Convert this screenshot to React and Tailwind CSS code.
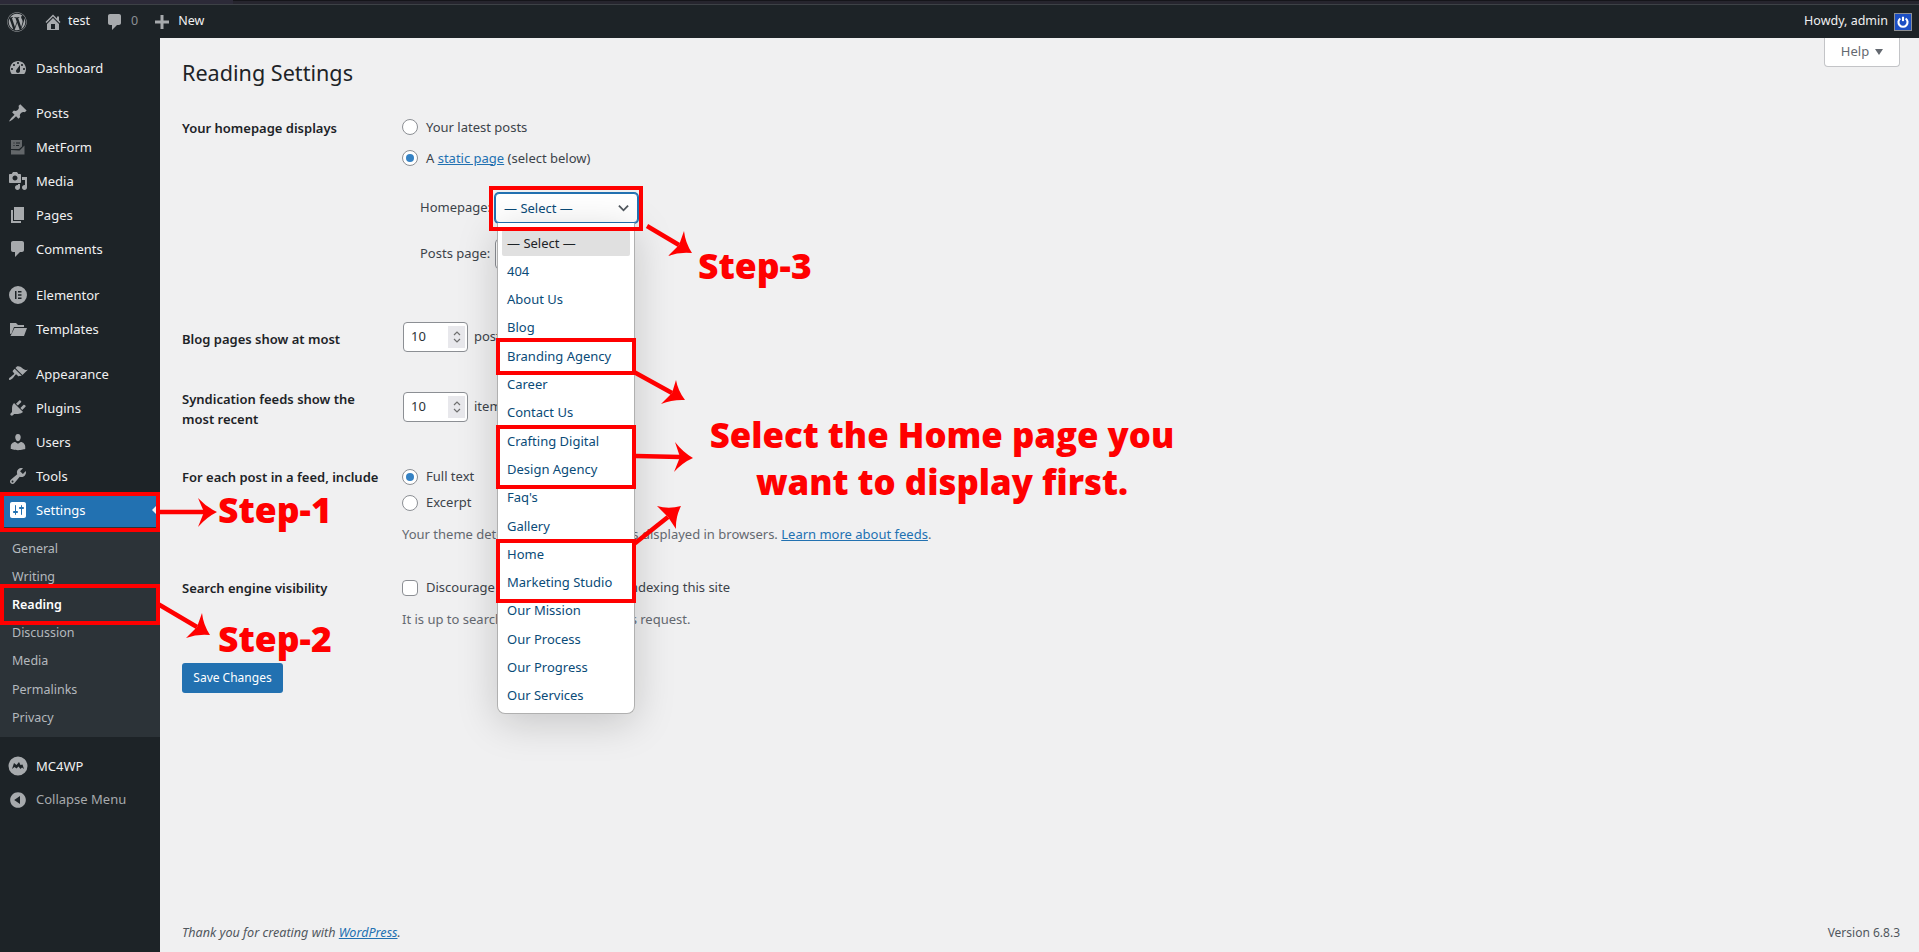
import React from "react";
import { FaWordpress } from "react-icons/fa";

const icons = {
  dashboard:
    "M3.76 16h12.48c1.1-1.37 1.76-3.11 1.76-5 0-4.42-3.58-8-8-8s-8 3.58-8 8c0 1.89.66 3.63 1.76 5zM10 4c.55 0 1 .45 1 1s-.45 1-1 1-1-.45-1-1 .45-1 1-1zM6 6c.55 0 1 .45 1 1s-.45 1-1 1-1-.45-1-1 .45-1 1-1zm8 0c.55 0 1 .45 1 1s-.45 1-1 1-1-.45-1-1 .45-1 1-1zm-5.37 5.55L12 7v6c0 1.1-.9 2-2 2s-2-.9-2-2c0-.57.24-1.08.63-1.45zM4 10c.55 0 1 .45 1 1s-.45 1-1 1-1-.45-1-1 .45-1 1-1zm12 0c.55 0 1 .45 1 1s-.45 1-1 1-1-.45-1-1 .45-1 1-1z",
  post: "M10.44 3.02l1.82-1.82 6.36 6.35-1.83 1.82c-1.05-.68-2.48-.57-3.41.36l-.75.75c-.92.93-1.04 2.35-.35 3.41l-1.83 1.82-2.41-2.41-2.8 2.79c-.42.42-3.38 2.71-3.8 2.29s1.86-3.39 2.28-3.81l2.79-2.79L4.1 9.36l1.83-1.82c1.05.69 2.48.57 3.4-.36l.75-.75c.93-.92 1.05-2.35.36-3.41z",
  form: "M3 3h11v6.500l-3 2.500H3zM5.500 5.500v1h1v-1zm2.500 0v1h4v-1zM5.500 8v1h1V8zM8 8v1h3V8zM3 13l8.500.5 5-5v9H3z",
  media:
    "M13 11V4c0-.55-.45-1-1-1h-1.67L9 1H5L3.67 3H2c-.55 0-1 .45-1 1v7c0 .55.45 1 1 1h10c.55 0 1-.45 1-1zM7 4.500c1.380 0 2.500 1.120 2.500 2.500S8.380 9.500 7 9.500 4.500 8.380 4.500 7 5.620 4.500 7 4.500zM14 6h5v10.500c0 1.380-1.120 2.500-2.500 2.500S14 17.880 14 16.500s1.120-2.500 2.500-2.500c.17 0 .34.02.5.05V9h-3V6zm-4 8.050V13h2v3.500c0 1.380-1.120 2.500-2.500 2.500S7 17.880 7 16.500 8.120 14 9.500 14c.17 0 .34.02.5.05z",
  pages: "M6 15V2h10v13H6zm-1 1h8v2H3V5h2v11z",
  comments:
    "M5 2h9c1.100 0 2 .9 2 2v7c0 1.100-.9 2-2 2h-2l-5 5v-5H5c-1.100 0-2-.9-2-2V4c0-1.100.9-2 2-2z",
  elementor:
    "M10 1a9 9 0 1 0 0 18 9 9 0 0 0 0-18zM7 6h1.500v8H7zm3 0h3.500v1.500H10zm0 3.250h3.500v1.500H10zm0 3.250h3.500V14H10z",
  templates: "M2 4h6l2 2h6v2H6L3.500 14.500 2 15zM6.500 9H19l-3 8H2.500z",
  appearance:
    "M14.480 11.060L7.410 3.990l1.500-1.500c.5-.56 2.300-.47 3.510.32 1.210.8 1.430 1.280 2.910 2.100 1.180.64 2.450 1.260 4.450.85zm-.71.71L6.700 4.700 4.930 6.470c-.39.39-.39 1.020 0 1.410l1.060 1.060c.39.39.39 1.030 0 1.420-.6.6-1.430 1.110-2.210 1.690-.35.26-.7.53-1.010.84C1.430 13.230.4 14.840 1.190 15.630c.79.79 2.400-.24 3.750-1.580.31-.31.58-.66.85-1.020.58-.77 1.070-1.590 1.660-2.180.39-.39 1.020-.39 1.410 0l1.060 1.060c.39.39 1.020.39 1.410 0z",
  plugins:
    "M13.110 4.360L9.870 7.600 8 5.730l3.240-3.240c.35-.34 1.050-.2 1.560.32.52.51.66 1.210.31 1.550zm-8 1.770l.91-1.120 9.010 9.010-1.190.84c-.71.71-2.630 1.160-3.820 1.160H6.140L4.900 17.260c-.59.59-1.540.59-2.120 0-.59-.58-.59-1.530 0-2.120l1.240-1.240v-3.880c0-1.130.4-3.190 1.090-3.890zm7.260 3.970l3.240-3.240c.34-.35 1.040-.21 1.550.31.52.51.66 1.210.31 1.550l-3.240 3.250z",
  users:
    "M10 9.250c-2.270 0-2.730-3.440-2.730-3.440C7 4.020 7.820 2 9.970 2c2.160 0 2.980 2.020 2.710 3.810 0 0-.41 3.440-2.680 3.440zm0 2.570L12.720 10c2.390 0 4.520 2.330 4.520 4.530v2.490s-3.650 1.130-7.240 1.130c-3.650 0-7.240-1.130-7.240-1.130v-2.490c0-2.250 1.940-4.480 4.470-4.480z",
  tools:
    "M16.680 9.770c-1.340 1.340-3.300 1.670-4.950.99l-5.410 6.520c-.99.99-2.590.99-3.580 0s-.99-2.590 0-3.570l6.520-5.420c-.68-1.650-.35-3.610.99-4.950 1.280-1.280 3.120-1.620 4.720-1.060l-2.890 2.890 2.820 2.820 2.860-2.870c.53 1.580.18 3.390-1.080 4.650zM3.810 16.210c.4.39 1.040.39 1.430 0 .4-.4.4-1.040 0-1.430-.39-.4-1.030-.4-1.430 0-.39.39-.39 1.030 0 1.430z",
  settings:
    "M18 16V4c0-1.100-.9-2-2-2H4c-1.100 0-2 .9-2 2v12c0 1.100.9 2 2 2h12c1.100 0 2-.9 2-2zM8 11h1c.55 0 1 .45 1 1s-.45 1-1 1H8v1.500c0 .28-.22.5-.5.5s-.5-.22-.5-.5V13H6c-.55 0-1-.45-1-1s.45-1 1-1h1V5.500c0-.28.22-.5.5-.5s.5.22.5.5V11zm5-2h-1c-.55 0-1-.45-1-1s.45-1 1-1h1V5.500c0-.28.22-.5.5-.5s.5.22.5.5V7h1c.55 0 1 .45 1 1s-.45 1-1 1h-1v5.500c0 .28-.22.5-.5.5s-.5-.22-.5-.5V9z",
  mc4wp:
    "M10 .5a9.500 9.500 0 1 0 0 19 9.500 9.500 0 0 0 0-19zM4 13l2-6 2.500 2L11 6l1.500 3 2-.5 1.500 4.500-2-1.500-1.500 1.500-2-2.500-2 2-2-1.500z",
  collapse:
    "M10 2.160c4.330 0 7.840 3.510 7.840 7.840s-3.510 7.840-7.840 7.840S2.160 14.330 2.160 10 5.710 2.160 10 2.160zm2 11.720V6.120L6.180 9.970z",
  home: "M16 8.500l1.530 1.530-1.060 1.060L10 4.620l-6.470 6.470-1.060-1.060L10 2.500l4 4v-2h2v4zm-6-2.460l6 5.990V18H4v-5.970zM12 17v-5H8v5h4z",
  plus: "M17 8.500v3h-5.500V17h-3v-5.500H3v-3h5.500V3h3v5.500z",
};

const Dashicon = ({ name, className }) => (
  <svg viewBox="0 0 20 20" className={className} fill="currentColor" fillRule="evenodd">
    <path d={icons[name]} />
  </svg>
);

const MenuItem = ({ icon, label, active, iconColor = "text-[#a7aaad]" }) => (
  <div
    className={`relative flex items-center h-[34px] text-[13px] ${
      active ? "bg-[#2271b1] text-white" : "text-[#f0f0f1]"
    }`}
  >
    <div className="w-[36px] flex justify-center">
      <Dashicon name={icon} className={`w-5 h-5 ${active ? "text-white" : iconColor}`} />
    </div>
    <span className="pt-[2px]">{label}</span>
    {active && (
      <div className="absolute right-0 top-[9px] w-0 h-0 border-y-[8px] border-y-transparent border-r-[8px] border-r-[#f0f0f1]"></div>
    )}
  </div>
);

const Sidebar = () => {
  const settingsSub = ["General", "Writing", "Reading", "Discussion", "Media", "Permalinks", "Privacy"];
  return (
    <div className="w-[160px] shrink-0 bg-[#1d2327] pt-[13px]">
      <MenuItem icon="dashboard" label="Dashboard" />
      <div className="h-[11px]"></div>
      <MenuItem icon="post" label="Posts" />
      <MenuItem icon="form" label="MetForm" iconColor="text-[#63676a]" />
      <MenuItem icon="media" label="Media" />
      <MenuItem icon="pages" label="Pages" />
      <MenuItem icon="comments" label="Comments" />
      <div className="h-[12px]"></div>
      <MenuItem icon="elementor" label="Elementor" />
      <MenuItem icon="templates" label="Templates" />
      <div className="h-[11px]"></div>
      <MenuItem icon="appearance" label="Appearance" />
      <MenuItem icon="plugins" label="Plugins" />
      <MenuItem icon="users" label="Users" />
      <MenuItem icon="tools" label="Tools" />
      <MenuItem icon="settings" label="Settings" active />
      <div className="bg-[#2c3338] h-[210px] pt-[8px]">
        {settingsSub.map((s) => (
          <div
            key={s}
            className={`h-[28.200px] flex items-center pl-3 text-[12.500px] ${
              s === "Reading" ? "text-white font-semibold" : "text-[#b4b9be]"
            }`}
          >
            {s}
          </div>
        ))}
      </div>
      <div className="h-[12px]"></div>
      <MenuItem icon="mc4wp" label="MC4WP" />
      <div className="flex items-center h-[34px] text-[13px] text-[#a7aaad]">
        <div className="w-[36px] flex justify-center">
          <Dashicon name="collapse" className="w-5 h-5" />
        </div>
        <span>Collapse Menu</span>
      </div>
    </div>
  );
};

const AdminBar = () => (
  <div className="h-[33px] bg-[#1d2327] flex items-center text-[12.500px] text-[#f0f0f1]">
    <FaWordpress className="ml-[7px] w-[20px] h-[20px] text-[#a7aaad]" />
    <Dashicon name="home" className="ml-[16px] w-[20px] h-[20px] text-[#a7aaad]" />
    <span className="ml-[5px]">test</span>
    <Dashicon name="comments" className="ml-[15px] w-[20px] h-[20px] text-[#a7aaad]" />
    <span className="ml-[6px] text-[#8c8f94]">0</span>
    <Dashicon name="plus" className="ml-[14px] w-[20px] h-[20px] text-[#a7aaad]" />
    <span className="ml-[6px]">New</span>
    <span className="ml-auto">Howdy, admin</span>
    <div className="ml-[6px] mr-[7px] w-[18px] h-[18px] bg-[#1c4fc4] border border-[#8c8f94] flex items-center justify-center">
      <svg viewBox="0 0 16 16" className="w-[14px] h-[14px]" fill="none" stroke="white" strokeWidth="2.400">
        <path d="M5 4a5.200 5.200 0 1 0 6 0" />
        <path d="M8 2v5" />
      </svg>
    </div>
  </div>
);

const Radio = ({ checked }) => (
  <div className="w-4 h-4 rounded-full border border-[#8c8f94] bg-white flex items-center justify-center shrink-0">
    {checked && <div className="w-2 h-2 rounded-full bg-[#3582c4]"></div>}
  </div>
);

const NumberInput = () => (
  <div className="w-[65px] h-[30px] rounded-[4px] border border-[#8c8f94] bg-white flex items-center pl-[7px] pr-[2px] text-[13px] text-[#2c3338]">
    <span>10</span>
    <div className="ml-auto w-[17px] h-[22px] bg-[#e8e8ec] flex items-center justify-center">
      <svg viewBox="0 0 10 16" className="w-[10px] h-[16px]" fill="none" stroke="#707070" strokeWidth="1.200">
        <path d="M2 6l3-3 3 3M2 10l3 3 3-3" />
      </svg>
    </div>
  </div>
);

const pages = [
  "404",
  "About Us",
  "Blog",
  "Branding Agency",
  "Career",
  "Contact Us",
  "Crafting Digital",
  "Design Agency",
  "Faq's",
  "Gallery",
  "Home",
  "Marketing Studio",
  "Our Mission",
  "Our Process",
  "Our Progress",
  "Our Services",
];

const SelectDropdown = () => (
  <div className="absolute left-[497px] top-[185px] w-[138px] h-[491px] bg-white rounded-b-[8px] border-x border-b border-[#b0b0b0] shadow-[0_8px_40px_rgba(0,0,0,0.18)] px-[4px] pt-[7px] text-[13px] text-[#0a4b78]">
    <div className="h-[26px] bg-[#e0e0e0] rounded-[2px] flex items-center pl-[5px] pt-[2px] text-[#1d2327]">— Select —</div>
    {pages.map((p) => (
      <div key={p} className="h-[28.300px] flex items-center pl-[5px] pt-[3px] whitespace-nowrap">
        {p}
      </div>
    ))}
  </div>
);

const SettingsForm = () => (
  <div className="relative flex-1 flex flex-col pl-[22px] pr-[19px] text-[13px] text-[#3c434a]">
    <div className="absolute top-0 right-[19px] w-[76px] h-[29px] bg-white border border-t-0 border-[#c3c4c7] rounded-b-[4px] flex items-center justify-center gap-[6px] text-[#646970]">
      <span>Help</span>
      <div className="w-0 h-0 border-x-[4px] border-x-transparent border-t-[6px] border-t-[#646970]"></div>
    </div>

    <h1 className="mt-[20px] h-[30px] text-[21.600px] leading-[30px] text-[#1d2327]">Reading Settings</h1>

    <div className="mt-[29px] flex">
      <div className="w-[220px] pt-[1px] font-semibold text-[#1d2327] leading-[20px]">Your homepage displays</div>
      <div>
        <div className="flex items-center gap-[8px] h-[20px]">
          <Radio />
          <span className="pt-[1px]">Your latest posts</span>
        </div>
        <div className="mt-[11px] flex items-center gap-[8px] h-[20px]">
          <Radio checked />
          <span className="pt-[1px]">
            A <a className="text-[#2271b1] underline">static page</a> (select below)
          </span>
        </div>
        <div className="mt-[25px] ml-[18px] flex items-center h-[30px]">
          <span className="w-[75px] whitespace-nowrap">Homepage:</span>
          <div className="w-[143px] h-[30px] rounded-[4px] border border-[#2271b1] bg-white shadow-[0_0_0_1px_#2271b1] flex items-center justify-between pl-[8px] pr-[8px] text-[#0a4b78]">
            <span className="pt-[2px]">— Select —</span>
            <svg viewBox="0 0 12 8" className="w-[11px] h-[8px]" fill="none" stroke="#50575e" strokeWidth="2">
              <path d="M1 1.500l5 5 5-5" />
            </svg>
          </div>
        </div>
        <div className="mt-[16px] ml-[18px] flex items-center h-[30px]">
          <span className="w-[75px] whitespace-nowrap">Posts page:</span>
          <div className="w-[120px] h-[30px] rounded-[4px] border border-[#8c8f94] bg-white"></div>
        </div>
      </div>
    </div>

    <div className="mt-[53px] flex">
      <div className="w-[221px] pt-[7px] font-semibold text-[#1d2327] leading-[20px]">Blog pages show at most</div>
      <div className="flex items-center gap-[6px] h-[30px]">
        <NumberInput />
        <span>posts</span>
      </div>
    </div>

    <div className="mt-[40px] flex">
      <div className="w-[221px] -mt-[3px] font-semibold text-[#1d2327] leading-[20px]">
        Syndication feeds show the
        <br />
        most recent
      </div>
      <div className="flex items-center gap-[6px] h-[30px]">
        <NumberInput />
        <span>items</span>
      </div>
    </div>

    <div className="mt-[38px] flex">
      <div className="w-[220px] font-semibold text-[#1d2327] leading-[20px] whitespace-nowrap">
        For each post in a feed, include
      </div>
      <div>
        <div className="flex items-center gap-[8px] h-[20px]">
          <Radio checked />
          <span>Full text</span>
        </div>
        <div className="mt-[6px] flex items-center gap-[8px] h-[20px]">
          <Radio />
          <span>Excerpt</span>
        </div>
        <p className="mt-[11px] h-[20px] leading-[20px] text-[#646970] whitespace-nowrap">
          Your theme determines how content is displayed in browsers.{" "}
          <a className="text-[#2271b1] underline">Learn more about feeds</a>.
        </p>
      </div>
    </div>

    <div className="mt-[34px] flex">
      <div className="w-[220px] font-semibold text-[#1d2327] leading-[20px]">Search engine visibility</div>
      <div>
        <div className="flex items-center gap-[8px] h-[20px]">
          <div className="w-4 h-4 rounded-[4px] border border-[#8c8f94] bg-white shrink-0"></div>
          <span>Discourage search engines from indexing this site</span>
        </div>
        <p className="mt-[11px] h-[20px] leading-[20px] text-[#646970]">
          It is up to search engines to honor this request.
        </p>
      </div>
    </div>

    <button className="mt-[34px] w-[101px] h-[30px] rounded-[3px] bg-[#2271b1] text-white text-[12px]">
      Save Changes
    </button>

    <div className="mt-auto mb-[9px] flex items-center justify-between text-[12.600px] leading-[20px] text-[#50575e]">
      <span className="italic">
        Thank you for creating with <a className="text-[#2271b1] underline">WordPress</a>.
      </span>
      <span className="text-[12px]">Version 6.8.3</span>
    </div>
  </div>
);

const RedBox = ({ className }) => <div className={`absolute border-[4px] border-[#ff0000] ${className}`}></div>;

const StepText = ({ className, children }) => (
  <div
    className={`absolute text-[#ff0000] font-extrabold whitespace-nowrap leading-none [font-family:'Open_Sans',sans-serif] ${className}`}
  >
    {children}
  </div>
);

// line + barbed head, drawn in page coordinates
const mix = (a, b, t) => `${a[0] * (1 - t) + b[0] * t} ${a[1] * (1 - t) + b[1] * t}`;
const Arrow = ({ from, tip, barbA, barbB, notch }) => {
  const ctrlA = mix([(tip[0] + barbA[0]) / 2, (tip[1] + barbA[1]) / 2], notch, 0.3);
  const ctrlB = mix([(tip[0] + barbB[0]) / 2, (tip[1] + barbB[1]) / 2], notch, 0.3);
  return (
    <g>
      <line x1={from[0]} y1={from[1]} x2={notch[0]} y2={notch[1]} stroke="#ff0000" strokeWidth="4.500" />
      <path
        d={`M${tip[0]} ${tip[1]}Q${ctrlA} ${barbA[0]} ${barbA[1]}L${notch[0]} ${notch[1]}L${barbB[0]} ${barbB[1]}Q${ctrlB} ${tip[0]} ${tip[1]}Z`}
        fill="#ff0000"
      />
    </g>
  );
};

const Annotations = () => (
  <>
    <RedBox className="left-0 top-[454px] w-[160px] h-[40px]" />
    <RedBox className="left-0 top-[546px] w-[160px] h-[41px]" />
    <RedBox className="left-[489px] top-[148px] w-[154px] h-[45px]" />
    <RedBox className="left-[496px] top-[300px] w-[140px] h-[37px]" />
    <RedBox className="left-[496px] top-[387px] w-[140px] h-[64px]" />
    <RedBox className="left-[496px] top-[501px] w-[140px] h-[64px]" />

    <svg className="absolute left-0 top-[-38px] w-[1200px] h-[800px] pointer-events-none" viewBox="0 0 1200 800">
      <Arrow from={[160, 512]} tip={[217, 512]} barbA={[198, 498]} barbB={[198, 527]} notch={[204, 512]} />
      <Arrow from={[158, 604]} tip={[210, 635]} barbA={[202, 613]} barbB={[186, 638]} notch={[197, 627]} />
      <Arrow from={[647, 226]} tip={[692, 253]} barbA={[684, 231]} barbB={[668, 256]} notch={[679, 245]} />
      <Arrow from={[634, 372]} tip={[685, 400]} barbA={[676, 380]} barbB={[661, 404]} notch={[672, 393]} />
      <Arrow from={[636, 456]} tip={[693, 458]} barbA={[675, 442]} barbB={[674, 472]} notch={[680, 457]} />
      <Arrow from={[634, 544]} tip={[681, 506]} barbA={[657, 506]} barbB={[676, 529]} notch={[668, 517]} />
    </svg>

    <StepText className="left-[218px] top-[454px] text-[35.500px]">Step-1</StepText>
    <StepText className="left-[218px] top-[583px] text-[35.500px]">Step-2</StepText>
    <StepText className="left-[698px] top-[210px] text-[35.500px]">Step-3</StepText>
    <div className="absolute left-[680px] top-[373px] w-[524px] text-center text-[#ff0000] font-extrabold text-[34.800px] leading-[47px] [font-family:'Open_Sans',sans-serif]">
      Select the Home page you
      <br />
      want to display first.
    </div>
  </>
);

export default function App() {
  return (
    <div className="h-[952px] w-full overflow-hidden flex flex-col bg-[#f0f0f1] [font-family:'Noto_Sans',sans-serif]">
      <div className="h-[5px] flex border-b border-[#3d4146]">
        <div className="w-[233px] bg-[#2c2a38]"></div>
        <div className="flex-1 bg-[#26252e] border-t border-[#15151a]"></div>
      </div>
      <AdminBar />
      <div className="relative flex-1 flex min-h-0">
        <Sidebar />
        <SettingsForm />
        <SelectDropdown />
        <Annotations />
      </div>
    </div>
  );
}
